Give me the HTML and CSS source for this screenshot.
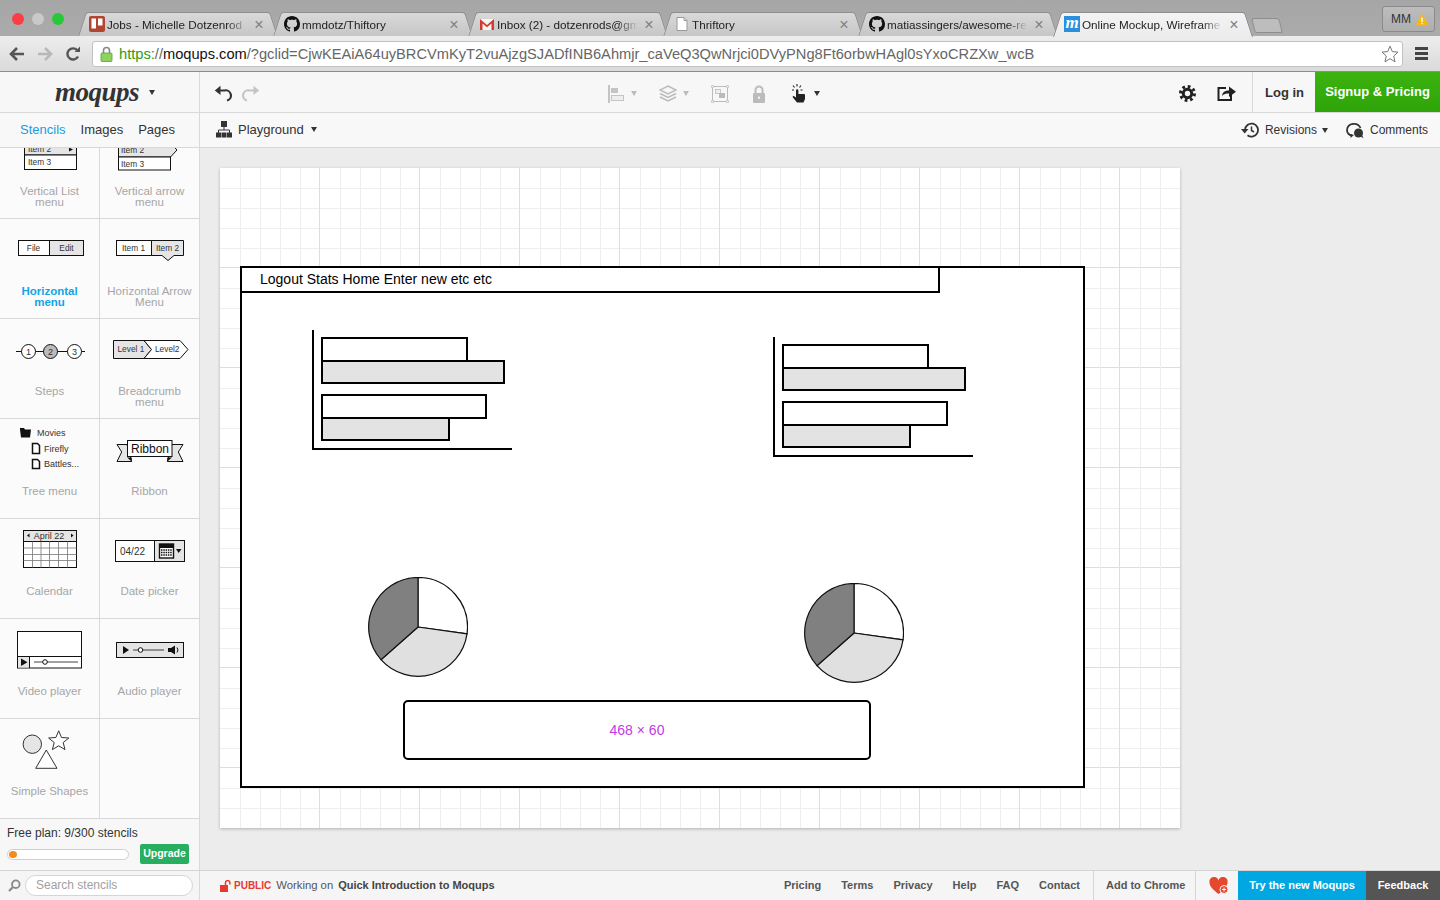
FILE: index.html
```html
<!DOCTYPE html>
<html lang="en">
<head>
    <meta charset="UTF-8">
    <title>Online Mockup, Wireframe - Moqups</title>
    <link rel="stylesheet" href="styles.css">
</head>
<body>
<svg class="defs" width="0" height="0">
    <symbol id="octocat" viewBox="0 0 16 16">
        <path d="M8 0C3.58 0 0 3.58 0 8c0 3.54 2.29 6.53 5.47 7.59.4.07.55-.17.55-.38 0-.19-.01-.82-.01-1.49-2.01.37-2.53-.49-2.69-.94-.09-.23-.48-.94-.82-1.13-.28-.15-.68-.52-.01-.53.63-.01 1.08.58 1.23.82.72 1.21 1.87.87 2.33.66.07-.52.28-.87.51-1.07-1.78-.2-3.64-.89-3.64-3.95 0-.87.31-1.59.82-2.15-.08-.2-.36-1.02.08-2.12 0 0 .67-.21 2.2.82.64-.18 1.32-.27 2-.27.68 0 1.36.09 2 .27 1.53-1.04 2.2-.82 2.2-.82.44 1.1.16 1.92.08 2.12.51.56.82 1.27.82 2.15 0 3.07-1.87 3.75-3.65 3.95.29.25.54.73.54 1.48 0 1.07-.01 1.93-.01 2.2 0 .21.15.46.55.38A8.013 8.013 0 0016 8c0-4.42-3.58-8-8-8z" fill="#111"/>
    </symbol>
    <symbol id="pie" viewBox="0 0 100 100">
        <path d="M50 50V.5A49.5 49.5 0 0 1 99 56.8Z" fill="#fff" stroke="#111" stroke-width="1.2"/>
        <path d="M50 50L99 56.8A49.5 49.5 0 0 1 13 82.7Z" fill="#e0e0e0" stroke="#111" stroke-width="1.2"/>
        <path d="M50 50L13 82.7A49.5 49.5 0 0 1 50 .5Z" fill="#808080" stroke="#111" stroke-width="1.2"/>
    </symbol>
    <symbol id="bars" viewBox="0 0 210 130">
        <path d="M2 0V119M1 119H201" fill="none" stroke="#000" stroke-width="2"/>
        <rect x="11" y="8" width="145" height="23" fill="#fff" stroke="#000" stroke-width="2"/>
        <rect x="11" y="31" width="182" height="22" fill="#e3e3e3" stroke="#000" stroke-width="2"/>
        <rect x="11" y="65" width="164" height="23" fill="#fff" stroke="#000" stroke-width="2"/>
        <rect x="11" y="88" width="127" height="22" fill="#e3e3e3" stroke="#000" stroke-width="2"/>
    </symbol>
</svg>

<div class="browser-tabs">
    <div class="traffic">
        <span class="traffic__dot traffic__dot--red"></span>
        <span class="traffic__dot traffic__dot--gray"></span>
        <span class="traffic__dot traffic__dot--green"></span>
    </div>
    <div class="tab">
        <svg class="tab__icon" width="16" height="16" viewBox="0 0 16 16"><rect width="16" height="16" rx="2" fill="#b04632"/><rect x="2.5" y="2.5" width="4.5" height="10" fill="#fff"/><rect x="9" y="2.5" width="4.5" height="7" fill="#fff"/></svg>
        <span class="tab__title">Jobs - Michelle Dotzenrod</span>
        <span class="tab__close">×</span>
    </div>
    <div class="tab">
        <svg class="tab__icon" width="16" height="16"><use href="#octocat"/></svg>
        <span class="tab__title">mmdotz/Thiftory</span>
        <span class="tab__close">×</span>
    </div>
    <div class="tab">
        <svg class="tab__icon" width="16" height="16" viewBox="0 0 16 16"><path d="M1 3H15V14H1Z" fill="#f4f4f4"/><path d="M1 14V3L8 9 15 3V14H12.5V7.5L8 11.2 3.5 7.5V14Z" fill="#d23a2e"/></svg>
        <span class="tab__title">Inbox (2) - dotzenrods@gm</span>
        <span class="tab__close">×</span>
    </div>
    <div class="tab">
        <svg class="tab__icon" width="16" height="16" viewBox="0 0 16 16"><path d="M3 1.5H10L13 4.5V14.5H3Z" fill="#fff" stroke="#999"/><path d="M10 1.5V4.5H13" fill="none" stroke="#999"/></svg>
        <span class="tab__title">Thriftory</span>
        <span class="tab__close">×</span>
    </div>
    <div class="tab">
        <svg class="tab__icon" width="16" height="16"><use href="#octocat"/></svg>
        <span class="tab__title">matiassingers/awesome-re</span>
        <span class="tab__close">×</span>
    </div>
    <div class="tab tab--active">
        <span class="tab__icon tab__icon--moqups">m</span>
        <span class="tab__title">Online Mockup, Wireframe</span>
        <span class="tab__close">×</span>
    </div>
    <div class="tab-new"></div>
    <div class="profile">MM <svg width="14" height="13" viewBox="0 0 14 13"><path d="M7 .5L13.7 12.5H.3Z" fill="#f5b916"/><rect x="6.3" y="4.5" width="1.4" height="4.5" fill="#fff"/><rect x="6.3" y="9.8" width="1.4" height="1.4" fill="#fff"/></svg></div>
</div>

<div class="browser-bar">
    <span class="browser-bar__btn">
        <svg width="18" height="16" viewBox="0 0 18 16"><path d="M9 2L3 8 9 14M3.5 8H16" fill="none" stroke="#555" stroke-width="2.6"/></svg>
    </span>
    <span class="browser-bar__btn">
        <svg width="18" height="16" viewBox="0 0 18 16"><path d="M9 2L15 8 9 14M14.5 8H2" fill="none" stroke="#b8b8b8" stroke-width="2.6"/></svg>
    </span>
    <span class="browser-bar__btn">
        <svg width="16" height="16" viewBox="0 0 16 16"><path d="M13 10.5A5.6 5.6 0 1 1 12.2 4.2" fill="none" stroke="#555" stroke-width="2.4"/><path d="M9.5 6H15V.5Z" fill="#555"/></svg>
    </span>
    <div class="url">
        <svg width="13" height="16" viewBox="0 0 13 16"><path d="M3.5 7V4.5a3 3 0 0 1 6 0V7" fill="none" stroke="#888" stroke-width="1.6"/><rect x="1" y="7" width="11" height="8.5" rx="1" fill="#8fd35f" stroke="#5b9e34" stroke-width=".8"/></svg>
        <span class="url__text"><span class="url__https">https:</span><span class="url__dim">//</span>moqups.com<span class="url__dim">/?gclid=CjwKEAiA64uyBRCVmKyT2vuAjzgSJADfINB6Ahmjr_caVeQ3QwNrjci0DVyPNg8Ft6orbwHAgl0sYxoCRZXw_wcB</span></span>
        <svg class="url__star" width="18" height="18" viewBox="0 0 18 18"><path d="M9 1.2L11.3 6.6 17 7.1 12.7 11 14 16.8 9 13.7 4 16.8 5.3 11 1 7.1 6.7 6.6Z" fill="#fff" stroke="#777"/></svg>
    </div>
    <span class="menu-btn"><i></i><i></i><i></i></span>
</div>

<div class="app-head">
    <div class="app-head__logo">
        <span class="logo">moqups</span>
        <span class="caret"></span>
    </div>
    <div class="history">
        <svg width="18" height="17" viewBox="0 0 18 17"><path d="M5 5.5H10.5A5 5 0 0 1 13 15.5" fill="none" stroke="#333" stroke-width="2.2"/><path d="M6.5 .8V10L.8 5.4Z" fill="#333"/></svg>
        <svg width="18" height="17" viewBox="0 0 18 17"><path d="M13 5.5H7.5A5 5 0 0 0 5 15.5" fill="none" stroke="#c4c4c4" stroke-width="2.2"/><path d="M11.5 .8V10L17.2 5.4Z" fill="#c4c4c4"/></svg>
    </div>
    <div class="tools">
        <span class="tools__item">
            <svg width="17" height="18" viewBox="0 0 17 18"><rect width="2" height="18" fill="#c4c4c4"/><rect x="3" y="3" width="7" height="5" fill="#c4c4c4"/><rect x="3.5" y="10.5" width="12" height="5" fill="#eee" stroke="#c4c4c4"/></svg>
            <span class="caret caret--light"></span>
        </span>
        <span class="tools__item">
            <svg width="18" height="18" viewBox="0 0 18 18"><path d="M9 1L17 5 9 9 1 5Z" fill="none" stroke="#bbb" stroke-width="1.4"/><path d="M1 8.5L9 12.5 17 8.5M1 12L9 16 17 12" fill="none" stroke="#bbb" stroke-width="1.4"/></svg>
            <span class="caret caret--light"></span>
        </span>
        <span class="tools__item">
            <svg width="18" height="18" viewBox="0 0 18 18"><rect x="1.5" y="1.5" width="15" height="15" fill="none" stroke="#bbb"/><circle cx="1.5" cy="1.5" r="1.2" fill="#f7f7f7" stroke="#bbb"/><circle cx="16.5" cy="1.5" r="1.2" fill="#f7f7f7" stroke="#bbb"/><circle cx="1.5" cy="16.5" r="1.2" fill="#f7f7f7" stroke="#bbb"/><circle cx="16.5" cy="16.5" r="1.2" fill="#f7f7f7" stroke="#bbb"/><rect x="4.5" y="4.5" width="5" height="4" fill="#eee" stroke="#bbb" stroke-width=".8"/><rect x="8" y="8" width="6" height="5" fill="#bbb"/></svg>
        </span>
        <span class="tools__item tools__item--lock">
            <svg width="14" height="18" viewBox="0 0 14 18"><path d="M3.5 8V5a3.5 3.5 0 0 1 7 0V8" fill="none" stroke="#bbb" stroke-width="2"/><rect x="1" y="8" width="12" height="10" rx="1" fill="#bbb"/><rect x="6" y="11.5" width="2" height="2.5" fill="#eee"/></svg>
        </span>
        <span class="tools__item tools__item--dark">
            <svg width="15" height="19" viewBox="0 0 15 19"><path d="M5 6.5a1.2 1.2 0 0 1 2.4 0V10H13a1 1 0 0 1 1 1V15L12.5 18.5H6L1.5 13 2.5 11.8 5 13.5Z" fill="#222"/><path d="M6 0V2.5M2 1.5L3.5 3.5M10 1.5L8.5 3.5M1 6H3M9.5 6H11.5" stroke="#222" stroke-width="1.1"/></svg>
            <span class="caret"></span>
        </span>
    </div>
    <div class="head-actions">
        <svg width="17" height="17" viewBox="0 0 17 17"><circle cx="8.5" cy="8.5" r="4.2" fill="none" stroke="#222" stroke-width="3"/><circle cx="8.5" cy="8.5" r="7" fill="none" stroke="#222" stroke-width="3" stroke-dasharray="2.75 2.75"/></svg>
        <svg width="19" height="16" viewBox="0 0 19 16"><path d="M9 3H1.5V15H14V9" fill="none" stroke="#222" stroke-width="2"/><path d="M5 11C5.5 7 8 5.5 12 5.5V1.5L19 6.8 12 12V8.5C9 8.5 6.5 9 5 11Z" fill="#222"/></svg>
    </div>
    <a class="login">Log in</a>
    <a class="signup">Signup &amp; Pricing</a>
</div>

<div class="app-sub">
    <div class="app-sub__tabs">
        <span class="panel-tab panel-tab--active">Stencils</span>
        <span class="panel-tab">Images</span>
        <span class="panel-tab">Pages</span>
    </div>
    <div class="project">
        <svg width="16" height="17" viewBox="0 0 16 17"><rect x="5" width="6" height="6" fill="#333"/><path d="M8 6V9M2.5 12V9H13.5V12" fill="none" stroke="#333"/><rect y="11.5" width="5" height="5" fill="#333"/><rect x="5.5" y="11.5" width="5" height="5" fill="#333"/><rect x="11" y="11.5" width="5" height="5" fill="#333"/></svg>
        <span>Playground</span>
        <span class="caret"></span>
    </div>
    <div class="app-sub__right">
        <svg width="18" height="16" viewBox="0 0 18 16"><path d="M4 8A6.5 6.5 0 1 1 6.5 13.2" fill="none" stroke="#333" stroke-width="1.8"/><path d="M0 7H7.5L3.7 11.5Z" fill="#333"/><path d="M10.5 4.5V8.5L13 10" fill="none" stroke="#333" stroke-width="1.5"/></svg>
        <span class="app-sub__label">Revisions</span>
        <span class="caret caret--revisions"></span>
        <svg width="18" height="17" viewBox="0 0 18 17"><path d="M6 13.5C3 13 1 11 1 8A7 6.5 0 0 1 14.5 6" fill="none" stroke="#333" stroke-width="1.8"/><path d="M4.5 12V16L8 13" fill="#333"/><circle cx="12.5" cy="11" r="4.5" fill="#333"/><path d="M15 14.5L17.5 16.5 16 12.5Z" fill="#333"/></svg>
        <span class="app-sub__label">Comments</span>
    </div>
</div>

<div class="workspace">
    <aside class="sidebar">
        <div class="stencils">
            <div class="stencil-grid">
                <div class="stencil">
                    <svg class="stencil__art" viewBox="0 0 100 65">
                        <rect x="24.5" y="22" width="52" height="14" fill="#e5e5e5" stroke="#111"/>
                        <rect x="24.5" y="36" width="52" height="14.5" fill="#fff" stroke="#111"/>
                        <text x="28" y="33">Item 2</text><text x="28" y="46">Item 3</text>
                        <path d="M69 28.5L73 30.5 69 32.5Z" fill="#111"/>
                    </svg>
                    <div class="stencil__label">Vertical List menu</div>
                </div>
                <div class="stencil">
                    <svg class="stencil__art" viewBox="0 0 100 65">
                        <path d="M18.5 24H70.5L77 31 70.5 38H18.5Z" fill="#e5e5e5" stroke="#111"/>
                        <rect x="18.5" y="38" width="52" height="13" fill="#fff" stroke="#111"/>
                        <text x="21" y="34">Item 2</text><text x="21" y="48">Item 3</text>
                    </svg>
                    <div class="stencil__label">Vertical arrow menu</div>
                </div>

                <div class="stencil">
                    <svg class="stencil__art" viewBox="0 0 100 65">
                        <rect x="18.5" y="21.5" width="65" height="15" fill="#fff" stroke="#111"/>
                        <rect x="49.5" y="21.5" width="34" height="15" fill="#e5e5e5" stroke="#111"/>
                        <text x="33.5" y="32" class="mid">File</text><text x="66.5" y="32" class="mid">Edit</text>
                    </svg>
                    <div class="stencil__label stencil__label--active">Horizontal menu</div>
                </div>
                <div class="stencil">
                    <svg class="stencil__art" viewBox="0 0 100 65">
                        <rect x="16.5" y="21.5" width="35" height="15" fill="#fff" stroke="#111"/>
                        <path d="M51.5 21.5H83.5V36.5H74L68 41.5 62 36.5H51.5Z" fill="#e5e5e5" stroke="#111"/>
                        <text x="33.5" y="32" class="mid">Item 1</text><text x="67.5" y="32" class="mid">Item 2</text>
                    </svg>
                    <div class="stencil__label">Horizontal Arrow Menu</div>
                </div>

                <div class="stencil">
                    <svg class="stencil__art" viewBox="0 0 100 65">
                        <path d="M16 32.5H85" stroke="#111"/>
                        <circle cx="28.5" cy="32.5" r="7" fill="#fff" stroke="#111"/>
                        <circle cx="50.5" cy="32.5" r="7" fill="#bbb" stroke="#111"/>
                        <circle cx="74.5" cy="32.5" r="7" fill="#fff" stroke="#111"/>
                        <text x="28.5" y="36" class="mid big">1</text><text x="50.5" y="36" class="mid big">2</text><text x="74.5" y="36" class="mid big">3</text>
                    </svg>
                    <div class="stencil__label">Steps</div>
                </div>
                <div class="stencil">
                    <svg class="stencil__art" viewBox="0 0 100 65">
                        <path d="M13.5 21.5H44L51.5 30.5 44 39.5H13.5Z" fill="#e5e5e5" stroke="#111"/>
                        <path d="M44 21.5H80L88 30.5 80 39.5H44L51.5 30.5Z" fill="#fff" stroke="#111"/>
                        <text x="17.5" y="33">Level 1</text><text x="55" y="33">Level2</text>
                    </svg>
                    <div class="stencil__label">Breadcrumb menu</div>
                </div>

                <div class="stencil">
                    <svg class="stencil__art" viewBox="0 0 100 65">
                        <path d="M20 10.5V9H24L25 10.5H31L30 18.5H21Z" fill="#111"/>
                        <text x="37" y="17" class="big">Movies</text>
                        <path d="M32.5 24.5H37.5L39.5 26.5V34.5H32.5Z" fill="#fff" stroke="#111" stroke-width="1.5"/>
                        <text x="44" y="32.5" class="big">Firefly</text>
                        <path d="M32.5 40.5H37.5L39.5 42.5V49.5H32.5Z" fill="#fff" stroke="#111" stroke-width="1.5"/>
                        <text x="44" y="48" class="big">Battles...</text>
                    </svg>
                    <div class="stencil__label">Tree menu</div>
                </div>
                <div class="stencil">
                    <svg class="stencil__art" viewBox="0 0 100 65">
                        <path d="M17 25.5L21.7 33 17 42.5H31.7L27 25.5Z" fill="#e5e5e5" stroke="#111"/>
                        <path d="M83 25.5L78.3 33 83 42.5H67.3L72 25.5Z" fill="#e5e5e5" stroke="#111"/>
                        <path d="M27 38.5H31.7V42.5ZM72 38.5H67.3V42.5Z" fill="#111"/>
                        <rect x="27.5" y="21.5" width="44.5" height="16" fill="#fff" stroke="#111"/>
                        <text x="50" y="34" class="mid ribbon">Ribbon</text>
                    </svg>
                    <div class="stencil__label">Ribbon</div>
                </div>

                <div class="stencil">
                    <svg class="stencil__art" viewBox="0 0 100 65">
                        <rect x="23.5" y="11.5" width="53" height="37" fill="#fff" stroke="#111"/>
                        <rect x="23.5" y="11.5" width="53" height="11" fill="#e5e5e5" stroke="#111"/>
                        <path d="M23.5 29H76.5M23.5 35.5H76.5M23.5 41.5H76.5M32.5 22.5V48.5M41 22.5V48.5M49.5 22.5V48.5M58.5 22.5V48.5M67.5 22.5V48.5" stroke="#777" stroke-width=".8"/>
                        <path d="M29.5 14.5L27 16.5 29.5 18.5ZM71 14.5L73.5 16.5 71 18.5Z" fill="#111"/>
                        <text x="49" y="20" class="mid big">April 22</text>
                    </svg>
                    <div class="stencil__label">Calendar</div>
                </div>
                <div class="stencil">
                    <svg class="stencil__art" viewBox="0 0 100 65">
                        <rect x="15.5" y="21.5" width="69" height="21" fill="#fff" stroke="#111"/>
                        <rect x="54.5" y="21.5" width="30" height="21" fill="#e5e5e5" stroke="#111"/>
                        <text x="20" y="35.5" class="date">04/22</text>
                        <rect x="59.5" y="25" width="14" height="14" fill="#fff" stroke="#111" stroke-width="1.4"/>
                        <rect x="59.5" y="25" width="14" height="4" fill="#111"/>
                        <path d="M61 31H72M61 33.5H72M61 36H72" stroke="#111" stroke-width="1.4" stroke-dasharray="1.5 .8"/>
                        <path d="M76 30H81.5L78.7 34Z" fill="#111"/>
                    </svg>
                    <div class="stencil__label">Date picker</div>
                </div>

                <div class="stencil">
                    <svg class="stencil__art" viewBox="0 0 100 65">
                        <rect x="17.5" y="12.5" width="64" height="36.5" fill="#fff" stroke="#111"/>
                        <path d="M17.5 37.5H81.5M29.5 37.5V49" stroke="#111"/>
                        <rect x="18" y="38" width="11" height="10.5" fill="#e5e5e5"/>
                        <path d="M21 39.5L27.5 43.2 21 47Z" fill="#111"/>
                        <path d="M34 43H78" stroke="#111" stroke-width=".8"/>
                        <circle cx="45" cy="43" r="2.3" fill="#fff" stroke="#111"/>
                    </svg>
                    <div class="stencil__label">Video player</div>
                </div>
                <div class="stencil">
                    <svg class="stencil__art" viewBox="0 0 100 65">
                        <rect x="16.5" y="23.5" width="67" height="15" fill="#e5e5e5" stroke="#111"/>
                        <path d="M23 27L29 31 23 35Z" fill="#111"/>
                        <path d="M33 31H64" stroke="#111" stroke-width=".8"/>
                        <circle cx="40.5" cy="31" r="2.3" fill="#fff" stroke="#111"/>
                        <path d="M68 29H71L75 26.5V35.5L71 33H68Z" fill="#111"/>
                        <path d="M77 28.5Q79 31 77 33.5" fill="none" stroke="#111"/>
                    </svg>
                    <div class="stencil__label">Audio player</div>
                </div>

                <div class="stencil">
                    <svg class="stencil__art" viewBox="0 0 100 65">
                        <circle cx="32.3" cy="25.2" r="9.2" fill="#e5e5e5" stroke="#333"/>
                        <path d="M58.7 11.8L61.5 18.5 68.8 19 63.2 23.5 65 30.6 58.7 26.8 52.4 30.6 54.2 23.5 48.6 19 55.9 18.5Z" fill="#fff" stroke="#333"/>
                        <path d="M46.3 31L57 49.3H35.7Z" fill="#fff" stroke="#333"/>
                    </svg>
                    <div class="stencil__label">Simple Shapes</div>
                </div>
                <div class="stencil"></div>
            </div>
        </div>
        <div class="plan">
            <div class="plan__text">Free plan: 9/300 stencils</div>
            <div class="plan__row">
                <div class="plan__bar"><span class="plan__fill"></span></div>
                <a class="upgrade">Upgrade</a>
            </div>
        </div>
    </aside>

    <main class="canvas">
        <div class="paper">
            <svg class="drawing" width="960" height="660" viewBox="0 0 960 660">
                <rect x="21" y="99" width="843" height="520" fill="#fff" stroke="#000" stroke-width="2"/>
                <rect x="21" y="99" width="698" height="25" fill="#fff" stroke="#000" stroke-width="2"/>
                <text x="40" y="116" class="drawing__nav">Logout Stats Home Enter new etc etc</text>
                <use href="#bars" x="91" y="162" width="210" height="130"/>
                <use href="#bars" x="552" y="169" width="210" height="130"/>
                <use href="#pie" x="148" y="409" width="100" height="100"/>
                <use href="#pie" x="584" y="415" width="100" height="100"/>
                <rect x="184" y="533" width="466" height="58" rx="4" fill="#fff" stroke="#000" stroke-width="2"/>
                <text x="417" y="567" class="drawing__ad">468 × 60</text>
            </svg>
        </div>
    </main>
</div>

<footer class="foot">
    <div class="foot__search">
        <svg width="13" height="13" viewBox="0 0 13 13"><circle cx="7.8" cy="5.2" r="3.8" fill="none" stroke="#888" stroke-width="1.8"/><path d="M5 8L1 12" stroke="#888" stroke-width="2.2"/></svg>
        <div class="search-box">Search stencils</div>
    </div>
    <div class="foot__status">
        <svg width="11" height="12" viewBox="0 0 11 12"><rect y="5" width="8" height="7" fill="#e8392c"/><path d="M5.5 5V2.8a2.2 2.2 0 0 1 4.4 0V4.5" fill="none" stroke="#e8392c" stroke-width="1.5"/></svg>
        <span class="foot__public">PUBLIC</span>
        <span class="foot__working">Working on</span>
        <b class="foot__project">Quick Introduction to Moqups</b>
    </div>
    <nav class="foot__links">
        <a>Pricing</a><a>Terms</a><a>Privacy</a><a>Help</a><a>FAQ</a><a>Contact</a>
    </nav>
    <a class="foot__chrome">Add to Chrome</a>
    <span class="foot__heart">
        <svg width="20" height="17" viewBox="0 0 20 17"><path d="M9.5 17C4 12.5 .5 9.5 .5 5.5A4.5 4.5 0 0 1 9.5 3.5 4.5 4.5 0 0 1 18.5 5.5C18.5 9.5 15 12.5 9.5 17Z" fill="#e5482f"/><circle cx="15" cy="12.5" r="4" fill="#e5482f" stroke="#f5f5f5"/><path d="M13 12.5H17M15 10.5V14.5" stroke="#fff"/></svg>
    </span>
    <a class="foot__try">Try the new Moqups</a>
    <a class="foot__feedback">Feedback</a>
</footer>
</body>
</html>
```

FILE: styles.css
```css
* {
    box-sizing: border-box;
}

html,
body {
    margin: 0;
    height: 100%;
    overflow: hidden;
}

body {
    display: flex;
    flex-direction: column;
    height: 900px;
    font-family: "Liberation Sans", Arial, sans-serif;
    color: #333;
    background-color: #ececec;
}

.defs {
    position: absolute;
}

/* browser chrome */
.browser-tabs {
    display: flex;
    flex: none;
    position: relative;
    height: 36px;
    padding-top: 12px;
    padding-left: 82px;
    background: linear-gradient(#a6a6a6, #ababab);
}

.traffic {
    position: absolute;
    top: 13px;
    left: 12px;
    display: flex;
    gap: 8px;
}

.traffic__dot {
    width: 12px;
    height: 12px;
    border-radius: 50%;
}

.traffic__dot--red {
    background-color: #fb3d45;
}

.traffic__dot--gray {
    background-color: #c9c9c9;
}

.traffic__dot--green {
    background-color: #27c93a;
}

.tab {
    display: flex;
    position: relative;
    isolation: isolate;
    align-items: center;
    flex: none;
    width: 192px;
    height: 24px;
    margin-right: 3px;
    padding: 0 10px 0 7px;
    font-size: 11.7px;
    color: #222;
}

.tab::before,
.tab::after {
    content: "";
    position: absolute;
    top: 0;
    bottom: 0;
    width: 55%;
    z-index: -1;
    border-top: 1px solid #8e8e8e;
    background: linear-gradient(#d9d9d9, #c6c6c6);
}

.tab::before {
    left: 0;
    border-left: 1px solid #8e8e8e;
    border-top-left-radius: 3px;
    transform: skewX(-18deg);
}

.tab::after {
    right: 0;
    border-right: 1px solid #8e8e8e;
    border-top-right-radius: 3px;
    transform: skewX(18deg);
}

.tab--active {
    z-index: 2;
    height: 25px;
    padding-bottom: 1px;
}

.tab--active::before,
.tab--active::after {
    background: linear-gradient(#f3f3f3, #ececec);
}

.tab__icon {
    flex: none;
    width: 16px;
    height: 16px;
    margin-right: 2px;
}

.tab__icon--moqups {
    background-color: #2b8fdc;
    color: #fff;
    font-family: "Liberation Serif", serif;
    font-style: italic;
    font-weight: bold;
    font-size: 17px;
    line-height: 13px;
    text-align: center;
}

.tab__title {
    flex: 1;
    overflow: hidden;
    white-space: nowrap;
    -webkit-mask-image: linear-gradient(to right, #000 85%, transparent);
    mask-image: linear-gradient(to right, #000 85%, transparent);
}

.tab__close {
    flex: none;
    width: 10px;
    margin-left: 6px;
    font-size: 16px;
    line-height: 15px;
    text-align: center;
    color: #808080;
}

.tab-new {
    flex: none;
    width: 28px;
    height: 15px;
    margin-top: 6px;
    margin-left: 1px;
    border: 1px solid #8e8e8e;
    border-radius: 3px 3px 2px 2px;
    background-color: #bdbdbd;
    transform: skewX(14deg);
}

.profile {
    position: absolute;
    top: 6px;
    right: 5px;
    display: flex;
    align-items: center;
    gap: 4px;
    width: 53px;
    height: 26px;
    padding-left: 8px;
    border: 1px solid #8a8a8a;
    border-radius: 3px;
    font-size: 12px;
    background: linear-gradient(#bdbdbd, #aeaeae);
}

.browser-bar {
    display: flex;
    flex: none;
    align-items: center;
    height: 36px;
    padding-left: 3px;
    border-bottom: 1px solid #8c8c8c;
    background: linear-gradient(#ededed, #dadada);
}

.browser-bar__btn {
    display: flex;
    justify-content: center;
    flex: none;
    width: 28px;
}

.url {
    display: flex;
    align-items: center;
    flex: 1;
    height: 26px;
    margin-left: 5px;
    padding: 0 3px 0 7px;
    border: 1px solid #c2c2c2;
    border-radius: 3px;
    background-color: #fff;
}

.url__text {
    flex: 1;
    margin-left: 6px;
    font-size: 14.65px;
    white-space: nowrap;
    color: #111;
}

.url__https {
    color: #2a9a14;
}

.url__dim {
    color: #666;
}

.menu-btn {
    display: flex;
    flex-direction: column;
    align-items: center;
    gap: 2px;
    flex: none;
    width: 37px;
}

.menu-btn i {
    width: 13px;
    height: 3px;
    background-color: #444;
}

/* moqups header */
.app-head {
    display: flex;
    flex: none;
    align-items: center;
    height: 41px;
    border-bottom: 1px solid #d9d9d9;
    background-color: #f7f7f7;
}

.app-head__logo {
    display: flex;
    align-items: center;
    justify-content: flex-end;
    flex: none;
    width: 200px;
    height: 100%;
    padding-right: 44px;
    border-right: 1px solid #d9d9d9;
}

.logo {
    margin-right: 10px;
    font-family: "Liberation Serif", serif;
    font-style: italic;
    font-weight: bold;
    font-size: 27px;
    letter-spacing: -0.5px;
    color: #333;
}

.caret {
    display: inline-block;
    flex: none;
    width: 0;
    height: 0;
    border-style: solid;
    border-width: 5px 3.5px 0;
    border-color: #333 transparent transparent;
}

.caret--light {
    margin-left: 6px;
    border-top-color: #bbb;
}

.history {
    display: flex;
    gap: 10px;
    flex: none;
    width: 408px;
    padding: 3px 0 0 14px;
}

.tools {
    display: flex;
    align-items: center;
    flex: 1;
    padding-top: 3px;
}

.tools__item {
    display: flex;
    align-items: center;
    margin-right: 22px;
}

.tools__item--lock {
    margin-left: 1px;
    margin-right: 25px;
}

.tools__item--dark .caret {
    margin-left: 8px;
}

.head-actions {
    display: flex;
    align-items: center;
    gap: 21px;
    flex: none;
    padding: 2px 16px 0 0;
}

.login {
    flex: none;
    width: 63px;
    height: 100%;
    padding-left: 12px;
    border-left: 1px solid #d9d9d9;
    font-size: 13px;
    font-weight: bold;
    line-height: 42px;
    color: #333;
}

.signup {
    flex: none;
    width: 125px;
    height: 100%;
    font-size: 13px;
    font-weight: bold;
    line-height: 40px;
    text-align: center;
    color: #fff;
    background: linear-gradient(#3cb30f, #2ea40a);
}

.app-sub {
    display: flex;
    flex: none;
    align-items: center;
    height: 35px;
    border-bottom: 1px solid #d9d9d9;
    background-color: #f8f8f8;
    font-size: 13px;
}

.app-sub__tabs {
    display: flex;
    align-items: center;
    gap: 15px;
    flex: none;
    width: 200px;
    height: 100%;
    padding: 0 0 2px 20px;
    border-right: 1px solid #d9d9d9;
}

.panel-tab--active {
    color: #1d9be0;
}

.project {
    display: flex;
    align-items: center;
    flex: 1;
    gap: 6px;
    padding: 0 0 2px 16px;
}

.project .caret {
    margin-left: 1px;
}

.app-sub__right {
    display: flex;
    align-items: center;
    flex: none;
    padding-right: 12px;
}

.app-sub__label {
    margin-left: 6px;
    font-size: 12px;
}

.caret--revisions {
    margin-left: 5px;
    margin-right: 18px;
}

/* stencil panel */
.workspace {
    display: flex;
    flex: 1;
    min-height: 0;
}

.sidebar {
    display: flex;
    flex-direction: column;
    flex: none;
    width: 200px;
    background-color: #fbfbfb;
}

.stencils {
    flex: none;
    height: 671px;
    overflow: hidden;
}

.stencil-grid {
    display: grid;
    grid-template-columns: 100px 100px;
    grid-auto-rows: 100px;
    margin-top: -29px;
}

.stencil {
    border-right: 1px solid #d9d9d9;
    border-bottom: 1px solid #d9d9d9;
}

.stencil__art {
    display: block;
    width: 100px;
    height: 65px;
    margin-right: -1px;
}

.stencil__art text {
    font-size: 8.3px;
    fill: #333;
}

.stencil__art .mid {
    text-anchor: middle;
}

.stencil__art .big {
    font-size: 9px;
}

.stencil__art .ribbon {
    font-size: 12px;
    fill: #111;
}

.stencil__art .date {
    font-size: 10px;
}

.stencil__label {
    width: 88px;
    margin: 2px auto 0;
    font-size: 11.5px;
    line-height: 11px;
    text-align: center;
    color: #a6a6a6;
}

.stencil__label--active {
    font-weight: bold;
    color: #12a4e6;
}

.plan {
    flex: 1;
    padding: 7px 10px 0 7px;
    border-right: 1px solid #d9d9d9;
    background-color: #f7f7f7;
}

.plan__text {
    font-size: 12px;
    line-height: 14px;
}

.plan__row {
    display: flex;
    align-items: center;
    margin-top: 4px;
}

.plan__bar {
    width: 122px;
    height: 11px;
    padding: 1px;
    border: 1px solid #cfcfcf;
    border-radius: 6px;
    background-color: #fff;
}

.plan__fill {
    display: block;
    width: 8px;
    height: 7px;
    border-radius: 50%;
    background-color: #f58a1f;
}

.upgrade {
    width: 49px;
    height: 20px;
    margin-left: 11px;
    border-radius: 2px;
    font-size: 10.5px;
    font-weight: bold;
    line-height: 19px;
    text-align: center;
    color: #fff;
    background-color: #27ae60;
}

/* canvas */
.canvas {
    flex: 1;
    padding: 20px;
    background-color: #ececec;
}

.paper {
    --grid: transparent 20px, #eee 20px, #eee 21px, transparent 21px,
        transparent 40px, #eee 40px, #eee 41px, transparent 41px,
        transparent 60px, #eee 60px, #eee 61px, transparent 61px,
        transparent 80px, #eee 80px, #eee 81px, transparent 81px,
        transparent 99px, #ddd 99px, #ddd 100px, transparent 100px;
    width: 960px;
    height: 660px;
    background-color: #fff;
    background-image: linear-gradient(to right, var(--grid)), linear-gradient(to bottom, var(--grid));
    background-size: 100px 100px;
    box-shadow: 0 1px 3px rgba(0, 0, 0, 0.25);
}

.drawing {
    display: block;
}

.drawing__nav {
    font-size: 14px;
    fill: #000;
}

.drawing__ad {
    font-size: 14px;
    text-anchor: middle;
    fill: #c23ae6;
}

/* footer */
.foot {
    display: flex;
    flex: none;
    align-items: stretch;
    height: 30px;
    border-top: 1px solid #d5d5d5;
    background-color: #f5f5f5;
    font-size: 11px;
    line-height: 29px;
    color: #555;
}

.foot a {
    font-weight: bold;
}

.foot__search {
    display: flex;
    align-items: center;
    flex: none;
    width: 200px;
    padding-left: 8px;
    border-right: 1px solid #d9d9d9;
}

.search-box {
    width: 168px;
    height: 21px;
    margin-left: 4px;
    padding-left: 10px;
    border: 1px solid #d5d5d5;
    border-radius: 11px;
    font-size: 12px;
    line-height: 19px;
    color: #a0a0a0;
    background-color: #fff;
}

.foot__status {
    display: flex;
    align-items: center;
    flex: 1;
    padding-left: 20px;
}

.foot__public {
    margin-left: 3px;
    font-size: 10px;
    font-weight: bold;
    color: #e8392c;
}

.foot__working {
    margin-left: 5px;
    font-size: 11.3px;
}

.foot__project {
    margin-left: 5px;
    color: #444;
}

.foot__links {
    display: flex;
    gap: 20px;
    flex: none;
    padding-right: 13px;
}

.foot__chrome {
    flex: none;
    width: 103px;
    border-left: 1px solid #d5d5d5;
    border-right: 1px solid #d5d5d5;
    padding-left: 12px;
}

.foot__heart {
    display: flex;
    align-items: center;
    flex: none;
    width: 42px;
    padding-left: 13px;
}

.foot__try {
    flex: none;
    width: 128px;
    text-align: center;
    color: #fff;
    background-color: #00a7e1;
}

.foot__feedback {
    flex: none;
    width: 74px;
    text-align: center;
    color: #fff;
    background-color: #555;
}
```
